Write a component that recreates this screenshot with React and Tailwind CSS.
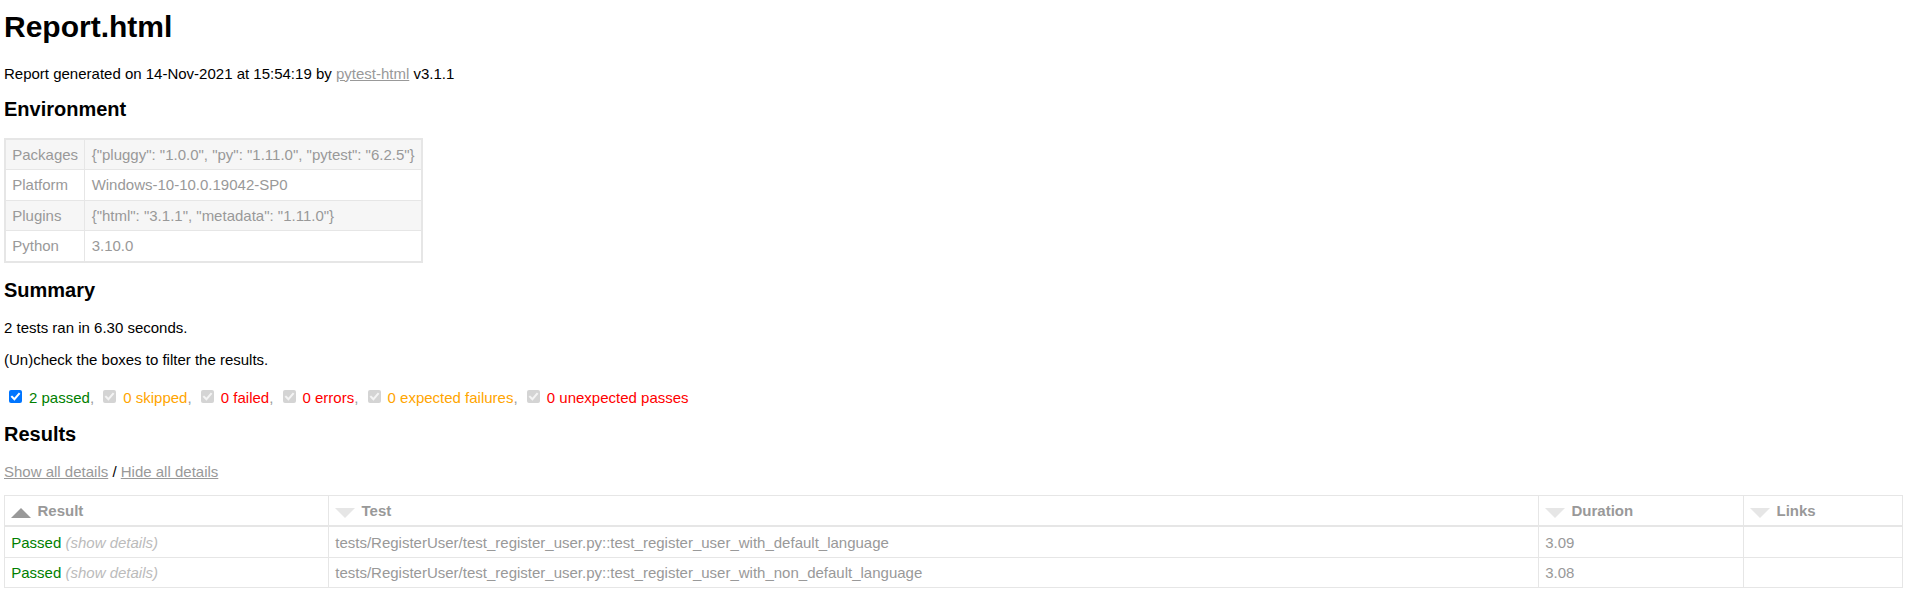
const environment = [
  ["Packages", '{"pluggy": "1.0.0", "py": "1.11.0", "pytest": "6.2.5"}'],
  ["Platform", "Windows-10-10.0.19042-SP0"],
  ["Plugins", '{"html": "3.1.1", "metadata": "1.11.0"}'],
  ["Python", "3.10.0"],
];

const filters = [
  { label: "2 passed", color: "text-[green]", checked: true },
  { label: "0 skipped", color: "text-[orange]" },
  { label: "0 failed", color: "text-[red]" },
  { label: "0 errors", color: "text-[red]" },
  { label: "0 expected failures", color: "text-[orange]" },
  { label: "0 unexpected passes", color: "text-[red]" },
];

const results = [
  { test: "tests/RegisterUser/test_register_user.py::test_register_user_with_default_language", duration: "3.09" },
  { test: "tests/RegisterUser/test_register_user.py::test_register_user_with_non_default_language", duration: "3.08" },
];

const FilterBox = ({ active }) => (
  <span
    className={`inline-block w-[13px] h-[13px] ml-[5px] mr-[7px] mt-[7px] mb-[3.75px] align-[-3.75px] rounded-[2px] ${
      active ? "bg-[#0075ff]" : "bg-[#d4d4d4]"
    }`}
  >
    <svg className="block" width="13" height="13" viewBox="0 0 13 13">
      <path
        d="M3 6.8 L5.4 9.2 L10 3.8"
        fill="none"
        stroke={active ? "#ffffff" : "#f4f4f4"}
        strokeWidth="2"
        strokeLinecap="square"
      />
    </svg>
  </span>
);

const SortIcon = ({ active }) =>
  active ? (
    <div className="float-left w-0 h-0 mt-[6.25px] mr-[6.25px] border-x-[10px] border-x-transparent border-b-[10px] border-b-[#999]" />
  ) : (
    <div className="float-left w-0 h-0 mt-[6.25px] mr-[6.25px] border-x-[10px] border-x-transparent border-t-[10px] border-t-[#e6e6e6]" />
  );

const App = () => {
  return (
    <div className="min-h-screen bg-white pt-[9.5px] pl-[4px] pr-[6px] font-['Liberation_Sans',Arial,sans-serif] text-[15px] leading-[normal] text-[#999]">
      <h1 className="text-[30px] font-bold text-black">Report.html</h1>
      <p className="mt-[21px] text-black">
        Report generated on 14-Nov-2021 at 15:54:19 by{" "}
        <a className="text-[#999] underline">pytest-html</a> v3.1.1
      </p>

      <h2 className="mt-[16.6px] mb-[16.6px] text-[20px] font-bold text-black">Environment</h2>
      <table className="border-2 border-[#e6e6e6]">
        <tbody>
          {environment.map(([key, value], i) => (
            <tr key={key} className={i % 2 === 0 ? "bg-[#f6f6f6]" : ""}>
              <td className="p-[6.25px] border border-[#e6e6e6]">{key}</td>
              <td className="p-[6.25px] border border-[#e6e6e6]">{value}</td>
            </tr>
          ))}
        </tbody>
      </table>

      <h2 className="mt-[16.6px] mb-[16.6px] text-[20px] font-bold text-black">Summary</h2>
      <p className="text-black">2 tests ran in 6.30 seconds. </p>
      <p className="mt-[15px] mb-[15px] text-black">(Un)check the boxes to filter the results.</p>
      <div>
        {filters.map((f, i) => (
          <span key={f.label}>
            <FilterBox active={f.checked} />
            <span className={f.color}>{f.label}</span>
            {i < filters.length - 1 ? ", " : ""}
          </span>
        ))}
      </div>

      <h2 className="mt-[16.6px] mb-[16.6px] text-[20px] font-bold text-black">Results</h2>
      <p className="mb-[15px] text-black">
        <a className="text-[#999] underline">Show all details</a>&nbsp;/&nbsp;
        <a className="text-[#999] underline">Hide all details</a>
      </p>

      <table className="w-full table-fixed border border-[#e6e6e6] text-left">
        <colgroup>
          <col className="w-[324px]" />
          <col className="w-[1210px]" />
          <col className="w-[205px]" />
          <col />
        </colgroup>
        <thead>
          <tr>
            <th className="p-[6.25px] border border-b-2 border-[#e6e6e6] font-bold">
              <SortIcon active />
              Result
            </th>
            <th className="p-[6.25px] border border-b-2 border-[#e6e6e6] font-bold">
              <SortIcon />
              Test
            </th>
            <th className="p-[6.25px] border border-b-2 border-[#e6e6e6] font-bold">
              <SortIcon />
              Duration
            </th>
            <th className="p-[6.25px] border border-b-2 border-[#e6e6e6] font-bold">
              <SortIcon />
              Links
            </th>
          </tr>
        </thead>
        <tbody>
          {results.map((r) => (
            <tr key={r.test}>
              <td className="p-[6.25px] border border-[#e6e6e6]">
                <span className="text-[green]">Passed</span>
                <span className="italic text-[#bbb]"> (show details)</span>
              </td>
              <td className="p-[6.25px] border border-[#e6e6e6]">{r.test}</td>
              <td className="p-[6.25px] border border-[#e6e6e6]">{r.duration}</td>
              <td className="p-[6.25px] border border-[#e6e6e6]"></td>
            </tr>
          ))}
        </tbody>
      </table>
    </div>
  );
};

export default App;
